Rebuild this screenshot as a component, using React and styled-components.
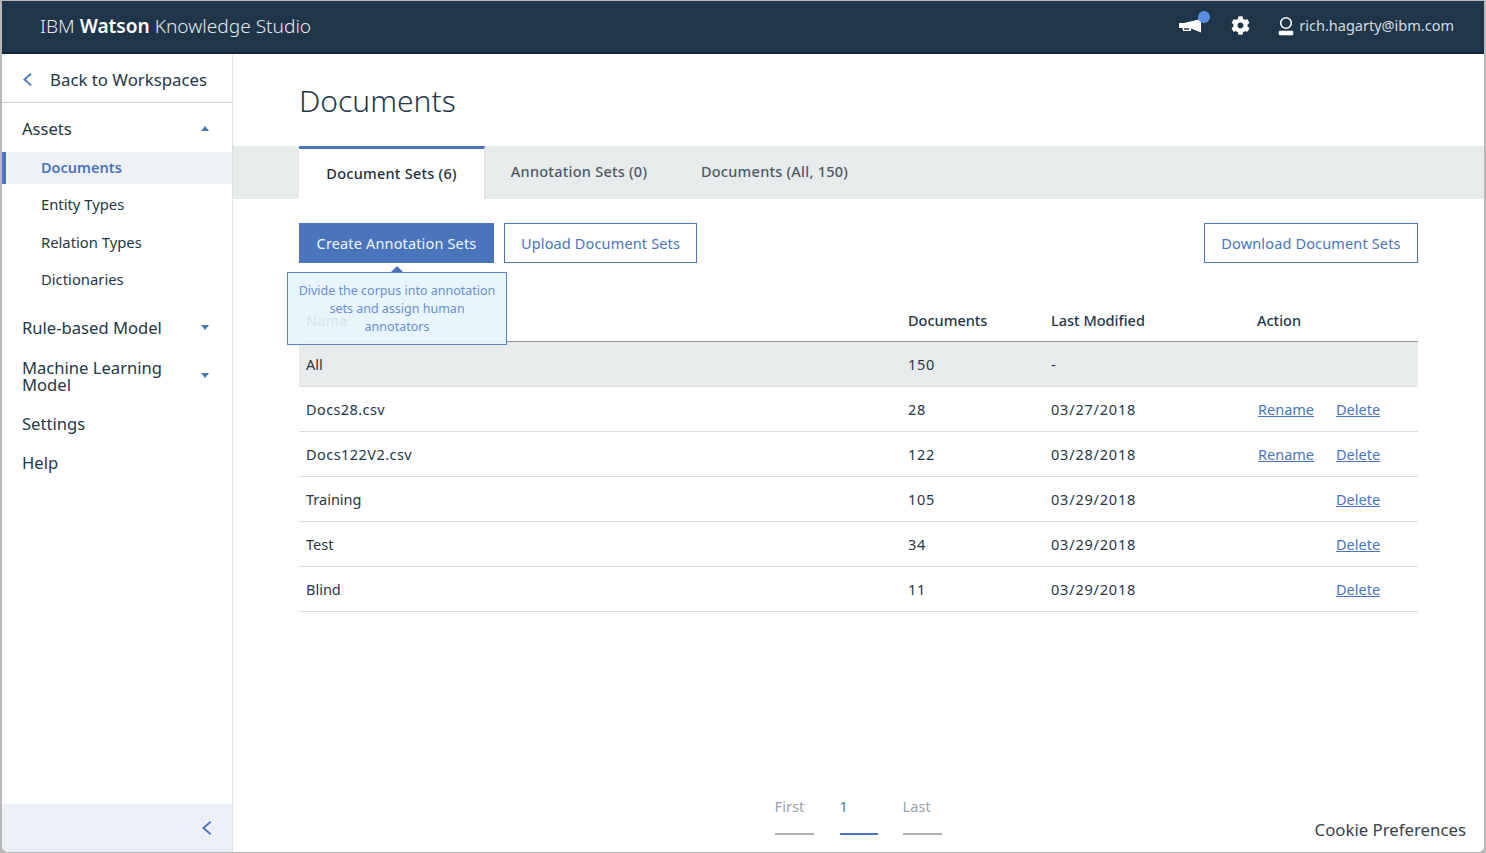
import React from 'react';
import styled, { createGlobalStyle } from 'styled-components';
import { FaCog } from 'react-icons/fa';

const font = `"Noto Sans", "Open Sans", sans-serif`;

const GlobalStyle = createGlobalStyle`
  html, body {
    margin: 0;
    padding: 0;
    background: #fff;
    font-family: ${font};
    overflow: hidden;
  }
`;

const Frame = styled.div`
  width: 1486px;
  height: 853px;
  box-sizing: border-box;
  padding: 1px 2px 1px 2px;
  background: #b9b9b9;
  display: flex;
  flex-direction: column;
`;

const Header = styled.header`
  height: 53px;
  flex: none;
  box-sizing: border-box;
  background: #1f364a;
  border-bottom: 2px solid #152634;
  display: flex;
  align-items: center;
  justify-content: space-between;
  padding: 0 30px 2px 38px;
  color: #fff;
`;

const Brand = styled.div`
  font-size: 19.1px;
  font-weight: 300;
  color: #e4e8ec;
  b {
    font-weight: 600;
    color: #fff;
  }
`;

const HeaderTools = styled.div`
  display: flex;
  align-items: center;
  color: #fff;
`;

const Bell = styled.span`
  position: relative;
  display: flex;
  margin-right: 30px;
`;

const BellDot = styled.span`
  position: absolute;
  top: -8px;
  right: -9px;
  width: 12px;
  height: 12px;
  border-radius: 50%;
  background: #5a8fe6;
`;

const GearWrap = styled.span`
  display: flex;
  margin-right: 28px;
`;

const UserMail = styled.span`
  display: flex;
  align-items: center;
  gap: 5px;
  font-size: 14.5px;
  color: #d5dbe0;
`;

const MailText = styled.span`
  margin-bottom: 2px;
`;

const Body = styled.div`
  flex: 1;
  display: flex;
  min-height: 0;
  background: #fff;
  border-radius: 0 0 6px 6px;
  overflow: hidden;
`;

const Sidebar = styled.aside`
  width: 231px;
  flex: none;
  box-sizing: border-box;
  border-right: 1px solid #dfe1e3;
  display: flex;
  flex-direction: column;
`;

const BackLink = styled.div`
  height: 49px;
  flex: none;
  box-sizing: border-box;
  border-bottom: 1px solid #cfd2d4;
  display: flex;
  align-items: center;
  padding: 2px 0 0 21px;
  gap: 18px;
  font-size: 16.8px;
  color: #253746;
`;

const Nav = styled.nav`
  flex: 1;
  padding-top: 7px;
`;

const NavHead = styled.div`
  display: flex;
  align-items: center;
  justify-content: space-between;
  box-sizing: border-box;
  padding: 0 23px 2px 20px;
  height: ${p => p.$h || 39}px;
  margin-top: ${p => p.$mt || 0}px;
  font-size: 16.6px;
  line-height: 17px;
  color: #253746;
  span {
    max-width: 160px;
  }
`;

const Caret = styled.i`
  width: 0;
  height: 0;
  border-left: 4.5px solid transparent;
  border-right: 4.5px solid transparent;
  ${p => (p.$up ? 'border-bottom: 5px solid #4a75bc;' : 'border-top: 5px solid #4a75bc;')}
`;

const SubItem = styled.div`
  height: ${p => (p.$active ? 32 : 37.5)}px;
  margin: ${p => (p.$active ? '3px 0 2.5px' : 0)};
  box-sizing: border-box;
  display: flex;
  align-items: center;
  padding: 0 0 2px ${p => (p.$active ? 35 : 39)}px;
  font-size: ${p => (p.$active ? 14.5 : 14.8)}px;
  font-weight: ${p => (p.$active ? 600 : 400)};
  color: ${p => (p.$active ? '#4a75bc' : '#253746')};
  background: ${p => (p.$active ? '#eef1f5' : 'transparent')};
  border-left: ${p => (p.$active ? '4px solid #4a75bc' : 'none')};
`;

const Collapse = styled.div`
  height: 48px;
  flex: none;
  background: #ebeff6;
  display: flex;
  align-items: center;
  justify-content: flex-end;
  padding-right: 20px;
`;

const Main = styled.main`
  flex: 1;
  min-width: 0;
  display: flex;
  flex-direction: column;
`;

const Title = styled.h1`
  margin: 0;
  height: 92px;
  flex: none;
  box-sizing: border-box;
  padding: 26px 0 0 66px;
  font-size: 30px;
  line-height: 42px;
  font-weight: 300;
  color: #253746;
`;

const TabBar = styled.div`
  height: 53px;
  flex: none;
  background: #e8ebec;
  display: flex;
  padding-left: 66px;
`;

const Tab = styled.div`
  box-sizing: border-box;
  display: flex;
  align-items: center;
  justify-content: center;
  padding-bottom: 3px;
  font-size: 14.5px;
  font-weight: 500;
  letter-spacing: 0.25px;
  width: ${p => p.$w}px;
  color: ${p => (p.$active ? '#1f2f3d' : '#4b5a66')};
  ${p => p.$active && `
    background: #fff;
    border-top: 3px solid #4a75bc;
    border-right: 1px solid #dfe1e3;
  `}
`;

const Content = styled.div`
  flex: 1;
  padding: 24px 66px 0;
  position: relative;
  display: flex;
  flex-direction: column;
`;

const Actions = styled.div`
  display: flex;
  gap: 10px;
  height: 40px;
  flex: none;
`;

const Button = styled.button`
  box-sizing: border-box;
  height: 40px;
  width: ${p => p.$w}px;
  padding: 0;
  margin-left: ${p => (p.$push ? 'auto' : 0)};
  font-family: ${font};
  font-size: 14.5px;
  letter-spacing: 0.15px;
  border: 1px solid #4a75bc;
  background: ${p => (p.$primary ? '#4a75bc' : '#fff')};
  color: ${p => (p.$primary ? '#f2f6fb' : '#4a75bc')};
`;

const Tooltip = styled.div`
  position: absolute;
  left: 54px;
  top: 73px;
  width: 220px;
  height: 73px;
  box-sizing: border-box;
  padding: 9px 8px 0;
  border: 1px solid #5a82c4;
  background: rgba(230, 244, 252, 0.92);
  color: #6b8fcf;
  font-size: 12.5px;
  line-height: 18px;
  text-align: center;
  &::before {
    content: '';
    position: absolute;
    left: 103px;
    top: -7px;
    border-left: 6px solid transparent;
    border-right: 6px solid transparent;
    border-bottom: 6px solid #4a75bc;
  }
`;

const Table = styled.table`
  margin-top: 38px;
  width: 1119px;
  border-collapse: collapse;
  table-layout: fixed;
  font-size: 14.5px;
  color: #253746;
`;

const Th = styled.th`
  height: 40px;
  box-sizing: border-box;
  padding: 0 0 2px 7px;
  text-align: left;
  font-weight: 500;
  border-bottom: 1px solid #8e979e;
  width: ${p => p.$w}px;
`;

const Row = styled.tr`
  background: ${p => (p.$shaded ? '#e8ebec' : 'transparent')};
`;

const Td = styled.td`
  height: 45px;
  box-sizing: border-box;
  padding: 0 0 0 7px;
  border-bottom: 1px solid #dcdfe1;
  letter-spacing: ${p => p.$track || 0}px;
`;

const ActionCell = styled.div`
  display: grid;
  grid-template-columns: 78px auto;
  padding-left: 1px;
`;

const TextLink = styled.a`
  color: #4a75bc;
  text-decoration: underline;
  grid-column: ${p => p.$col};
`;

const BottomBar = styled.div`
  margin-top: auto;
  position: relative;
  height: 69px;
  flex: none;
  display: flex;
  justify-content: center;
`;

const Pager = styled.div`
  display: flex;
  margin-left: -1px;
`;

const PageItem = styled.div`
  width: ${p => p.$w}px;
  margin-right: ${p => p.$gap}px;
  height: 52px;
  box-sizing: border-box;
  padding-top: 13px;
  font-size: 14.5px;
  letter-spacing: 0.1px;
  color: ${p => (p.$active ? '#4a75bc' : '#9aa3ab')};
  border-bottom: 2px solid ${p => (p.$active ? '#4a75bc' : '#aeb1b3')};
`;

const Cookie = styled.div`
  position: absolute;
  right: -48px;
  bottom: 11px;
  font-size: 16.8px;
  color: #3b4148;
`;

const Megaphone = () => (
  <svg width="22" height="14" viewBox="0 0 22 14" fill="#fff">
    <path d="M0 4 L5 4 L22 0 L22 13.5 L12 9.5 L12 12 L4 12 L3.5 9 L0 9 Z" />
    <path d="M5 9.2 L10.5 9.2 L10 10.8 L5.4 10.8 Z" fill="#1f364a" />
  </svg>
);

const UserIcon = () => (
  <svg width="16" height="20" viewBox="0 0 16 20" fill="none" stroke="#fff">
    <circle cx="8" cy="7" r="5.3" strokeWidth="1.6" />
    <rect x="1" y="15" width="14" height="4" rx="1" fill="#fff" strokeWidth="0.6" />
  </svg>
);

const Chevron = ({ size = 13 }) => (
  <svg width={size * 0.7} height={size} viewBox="0 0 7 10" fill="none" stroke="#4a75bc" strokeWidth="1.4">
    <path d="M6.2 0.6 L1 5 L6.2 9.4" />
  </svg>
);

const rows = [
  { name: 'All', docs: '150', date: '-', shaded: true },
  { name: 'Docs28.csv', docs: '28', date: '03/27/2018', rename: true, remove: true, track: 0.4 },
  { name: 'Docs122V2.csv', docs: '122', date: '03/28/2018', rename: true, remove: true, track: 0.45 },
  { name: 'Training', docs: '105', date: '03/29/2018', remove: true },
  { name: 'Test', docs: '34', date: '03/29/2018', remove: true },
  { name: 'Blind', docs: '11', date: '03/29/2018', remove: true },
];

export default function App() {
  return (
    <Frame>
      <GlobalStyle />
      <Header>
        <Brand>IBM <b>Watson</b> Knowledge Studio</Brand>
        <HeaderTools>
          <Bell>
            <Megaphone />
            <BellDot />
          </Bell>
          <GearWrap><FaCog size={19} color="#fff" /></GearWrap>
          <UserMail><UserIcon /><MailText>rich.hagarty@ibm.com</MailText></UserMail>
        </HeaderTools>
      </Header>
      <Body>
        <Sidebar>
          <BackLink><Chevron />Back to Workspaces</BackLink>
          <Nav>
            <NavHead>Assets<Caret $up /></NavHead>
            <SubItem $active>Documents</SubItem>
            <SubItem>Entity Types</SubItem>
            <SubItem>Relation Types</SubItem>
            <SubItem>Dictionaries</SubItem>
            <NavHead $mt={9.5}>Rule-based Model<Caret /></NavHead>
            <NavHead $mt={2} $h={54}><span>Machine Learning Model</span><Caret /></NavHead>
            <NavHead $mt={1}>Settings</NavHead>
            <NavHead>Help</NavHead>
          </Nav>
          <Collapse><Chevron size={14} /></Collapse>
        </Sidebar>
        <Main>
          <Title>Documents</Title>
          <TabBar>
            <Tab $active $w={186}>Document Sets (6)</Tab>
            <Tab $w={188}>Annotation Sets (0)</Tab>
            <Tab $w={203}>Documents (All, 150)</Tab>
          </TabBar>
          <Content>
            <Actions>
              <Button $primary $w={195}>Create Annotation Sets</Button>
              <Button $w={193}>Upload Document Sets</Button>
              <Button $push $w={214}>Download Document Sets</Button>
            </Actions>
            <Tooltip>Divide the corpus into annotation sets and assign human annotators</Tooltip>
            <Table>
              <thead>
                <tr>
                  <Th $w={602}>Name</Th>
                  <Th $w={143}>Documents</Th>
                  <Th $w={206}>Last Modified</Th>
                  <Th $w={168}>Action</Th>
                </tr>
              </thead>
              <tbody>
                {rows.map(row => (
                  <Row key={row.name} $shaded={row.shaded}>
                    <Td $track={row.track}>{row.name}</Td>
                    <Td $track={0.7}>{row.docs}</Td>
                    <Td $track={0.8}>{row.date}</Td>
                    <Td>
                      <ActionCell>
                        {row.rename && <TextLink $col={1}>Rename</TextLink>}
                        {row.remove && <TextLink $col={2}>Delete</TextLink>}
                      </ActionCell>
                    </Td>
                  </Row>
                ))}
              </tbody>
            </Table>
            <BottomBar>
              <Pager>
                <PageItem $w={39} $gap={26}>First</PageItem>
                <PageItem $w={38} $gap={25} $active>1</PageItem>
                <PageItem $w={39} $gap={0}>Last</PageItem>
              </Pager>
              <Cookie>Cookie Preferences</Cookie>
            </BottomBar>
          </Content>
        </Main>
      </Body>
    </Frame>
  );
}
